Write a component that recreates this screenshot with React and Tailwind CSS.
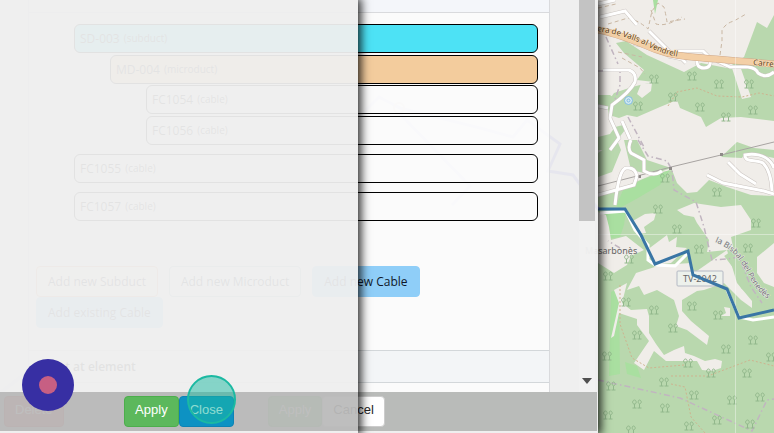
const ROW = "flex h-[29px] items-center gap-1 rounded-md border border-black px-[5px] text-xs text-neutral-900";
const BTN = "h-[31px] rounded border px-[10px] pb-[3px] font-['Liberation_Sans',Arial,sans-serif] text-[13px]";
const ADD = "h-[31px] rounded border px-[11px] text-xs text-gray-900";

const TREES = [
  [654, 79], [692, 76], [719, 84], [638, 106], [673, 97], [700, 107], [753, 110], [749, 84], [726, 117],
  [665, 178], [658, 209], [677, 229], [717, 192], [756, 223], [748, 248], [699, 249], [629, 259], [608, 276],
  [626, 302], [654, 310], [692, 306], [718, 315], [673, 328], [637, 335], [753, 340], [726, 349], [771, 357],
  [688, 363], [711, 373], [664, 382], [747, 373], [694, 395], [732, 400], [760, 397], [637, 404], [665, 408],
  [608, 415], [717, 420], [689, 426], [750, 424], [631, 430], [611, 386], [607, 356],
];

const ROADS =
  "M600 17l25-6 12 14M598 4l17-4M649 31l21 21M603 70h26q8 3 6 12-5 10-23 23l-2 13 9 20-9 12M598 106l10 2M622 121l8 18M630 34l5 10 5 1M668 56l14 3 4 4M675 51h28l7 7q2 10-6 10t-7-9M717 61l13 6h18q8 1 10 6 8 6 16-1M615 205q4-38 12-37 8-1 10 8M631 140q-4 8 0 13l13 7v11q10 6 18 0M598 195l36-10 3-9M707 175l16 8 41 8 10 3M774 168c-6-16-24-14-29-13 0 8 10 4 18 8q8 8 9 28M728 162l12 12 16 10";

function Tree({ x, y }) {
  return (
    <path
      transform={`translate(${x} ${y})`}
      d="M-2.500 4V0M-4.500 4h4M2.500 4V0M.5 4h4M-2.500 0c-3 0-2-4 0-4s2.500 4 0 4M2.500 0C.5-1 1-4 2.500-4s3 3 0 4"
    />
  );
}

function MapView() {
  return (
    <svg className="block h-full w-full" viewBox="0 0 774 433" preserveAspectRatio="xMaxYMin slice" aria-label="Map">
      <defs>
        <path id="road-n" d="M597 31C620 34 639 42 651 48S668 55 690 59" />
        <path id="town" d="M715 242C735 250 741 262 748 275S760 297 790 312" />
      </defs>
      <rect width="774" height="433" fill="#f0ede9" />
      <g fill="#b9d8ae">
        <path d="M616 43L626 41 647 55 684 72 701 63 727 68 744 57 757 22 767 28 774 15V121L741 117 721 118 706 127 701 117 680 108 677 100 660 107 637 117 627 115 619 118 609 115 607 103 614 93 632 87 640 85 654 82 637 80 644 70 624 53Z" />
        <path d="M598 95h12l4 3-6 9-10-2zM598 137l12-3 5-7 8-2 2 5-11 14-4 6h-12z" />
        <path d="M598 153L617 140 621 150 612 172 598 177ZM624 140H637L647 160 671 168 657 173 644 173 631 170Z" />
        <path d="M721 157L737 142 754 148 774 150V158L760 155 745 153 742 158Z" />
        <path d="M598 197L621 188 657 173 672 170 677 183 687 193 697 192 709 180 727 187 751 195 774 196V433H598Z" />
      </g>
      <g fill="#a9dfa0">
        <path d="M624 188l20-9 26-9-10 15-22 13-18 10-4-2zM602 213l24-2-2 14-4 12-14 2zM611 292l8-4 1 86-11 2zM625 362l12 4 4 12-14-4zM653 0h5l-3 14z" />
      </g>
      <g fill="#f0ede9">
        <path d="M732 68L740 66 751 97 742 99ZM641 84L652 83 651 91 642 98 637 94Z" />
        <path d="M677 210L694 203 721 207 741 205 751 220 751 230 731 237 733 247 727 250 707 252 709 240 697 223 694 217 684 215Z" />
        <path d="M631 222L645 214 656 213 654 220 644 227 646 233 638 234Z" />
        <path d="M647 250L667 235 669 242 677 237 676 247 687 248 671 263 654 265Z" />
        <path d="M598 212L606 215 609 227 611 240 626 236 644 250 631 256 627 265 614 273 598 263Z" />
        <path d="M774 243L757 257V273L764 283 774 287Z" />
        <path d="M627 290L636 273 661 265 691 263 694 273 727 250 737 283 752 301 752 308 741 300 724 283 704 290 697 291 682 300 682 311 691 321 709 336 707 345 687 330 676 326 679 316 674 300 657 290 644 295 639 286Z" />
        <path d="M627 283L622 303 631 310 647 309 649 316 649 333 656 344 664 355 674 350 684 346 685 353 694 356 705 361 715 359 722 361 721 368 712 371 702 370 697 361 666 361 654 351 644 370 634 363 649 341 637 325 637 319 619 313 614 336 611 338 619 303 614 290Z" />
        <path d="M724 307L730 308V316H721L726 313Z" />
      </g>
      <path d="M727 254l9 12 8 20 22 18" fill="none" stroke="#b9d8ae" strokeWidth="7" />
      <g fill="none" stroke="#c1b5c0" strokeWidth="1.500" strokeDasharray="6 3 1.500 3">
        <path d="M598 71h22v14l-7 20M606 37l12 27M638 140l10 16 19 5 5 9 2 20 22 12 8 25 5 21 3 12 15-1 12-2 12 30 11 16M628 117l16 30M598 380l82 18 72 33 15-31 7-1M620 248l-12-7" />
      </g>
      <path d="M598 186L641 175 671 167 721 155 774 142" fill="none" stroke="#a8a4a2" />
      <g fill="#8e8a88"><path d="M638 175h3v3h-3zM669 167h3v3h-3zM720 153h3v3h-3z" /></g>
      <g fill="none" stroke="#c9b7a3" strokeDasharray="4 3">
        <path d="M598 8l18-4M608 24l20-6q10 2 20 11l4-18 6-8 6 4q2 8 3 15l18-3M651 10l5 14q10 3 26-7M720 55l2-14V30q4-7 12-9l12-7M618 52l24 5M622 58l18 10 5 6" />
        <path d="M668 106l9-14 20-4 20 8 25 1 17-4 15 3M620 285v39l12 34 17 10 35-3M671 376h37l42-16 24 6M671 384l14 3 6 30 14 16" stroke="#ceb38f" strokeDasharray="2 2" />
      </g>
      <path d={ROADS} fill="none" stroke="#cbc5c1" strokeWidth="4" />
      <path d={ROADS} fill="none" stroke="#fff" strokeWidth="3" />
      <path d="M600 213l26-2 9 19 13 15v15l7 5 20 1 14-14M727 290l12 27 14 3 21-3" fill="none" stroke="#fff" strokeWidth="3" />
      <path d="M597 30c18 2 42 13 60 20s25 6 117 14" fill="none" stroke="#cfa88a" strokeWidth="7" />
      <path d="M597 30c18 2 42 13 60 20s25 6 117 14" fill="none" stroke="#f3cfa6" strokeWidth="6" />
      <g fill="none" stroke="#92b88c">
        {TREES.map(([x, y]) => <Tree key={`${x}-${y}`} x={x} y={y} />)}
      </g>
      <path d="M735.500 0v433M598 234.500h176" fill="none" stroke="#fff" strokeOpacity=".4" />
      <g fill="none" stroke="#82bce2"><circle cx="628.500" cy="100.500" r="4" fill="#d3e9f0" /><circle cx="628.500" cy="100.500" r="1.500" /></g>
      <rect x="677" y="271" width="46" height="15" rx="1" fill="#edf1ec" stroke="#b4b9c4" />
      <g fontFamily="'Noto Sans', sans-serif">
        <g fontSize="8" fill="#5e3d1b" stroke="#fbe2bd" strokeWidth="1" paintOrder="stroke">
          <text><textPath href="#road-n">era de Valls al Vendrell</textPath></text>
          <text x="753" y="65" transform="rotate(5 753 65)">Carre</text>
        </g>
        <text x="585" y="254" fontSize="9" fill="#666">Masarbonès</text>
        <text x="683" y="282" fontSize="9" fill="#666">TV-2042</text>
        <text fontSize="8" fill="#76717c" stroke="#e7ece2" strokeWidth="1" paintOrder="stroke"><textPath href="#town">la Bisbal del Penedès</textPath></text>
      </g>
      <path d="M597 209h28l16 26 14 29 33-13 5 24 34 14 12 29 35-8" fill="none" stroke="#3975a5" strokeWidth="3" />
      <path d="M0 393L365 111l14-14 21 11 80 20 33 9 14-17 33 24-12 27 25 4 25 34M400 114l70 72-18 19" fill="none" stroke="#8585de" strokeWidth="3" />
      <circle cx="399" cy="108" r="5" fill="none" stroke="#bd8d77" strokeWidth="2" />
    </svg>
  );
}

function Part({ name, kind, className = "" }) {
  return (
    <div className={`${ROW} ${className}`}>
      {name} <small className="text-[10px]">({kind})</small>
    </div>
  );
}

function SpanPanel() {
  return (
    <section className="absolute inset-y-0 right-44 left-0 flex flex-col bg-[#efefef]/92 pb-[2px] shadow-[1px_0_9px_2px_rgba(0,0,0,0.85)]">
      <div className="flex min-h-0 flex-1 overflow-hidden pr-[3px]">
        <div className="mr-[29px] ml-7 flex flex-1 flex-col border-x border-[#d9dadd] bg-white/75">
          <h2 className="flex h-[13px] shrink-0 items-end border-b border-[#d9dadd] bg-[#f4f6fa] pb-[11px] pl-[21px] text-xs leading-4 font-semibold">Structure</h2>
          <div className="flex flex-1 flex-col px-[11px] pt-[11px]">
            <div className="ml-[34px] flex flex-col gap-[9px]">
              <div className="flex flex-col gap-[2px]">
                <Part name="SD-003" kind="subduct" className="bg-[#4de2f5]" />
                <div className="ml-9 flex flex-col gap-px">
                  <Part name="MD-004" kind="microduct" className="bg-[#f3cc9d]" />
                  <div className="ml-9 flex flex-col gap-[2px]">
                    <Part name="FC1054" kind="cable" />
                    <Part name="FC1056" kind="cable" />
                  </div>
                </div>
              </div>
              <Part name="FC1055" kind="cable" />
              <Part name="FC1057" kind="cable" />
            </div>
            <div className="mt-[45px] -ml-1 flex flex-wrap gap-x-[11px]">
              <button className={`${ADD} border-[#e0a070] bg-[#fff0e4]`}>Add new Subduct</button>
              <button className={`${ADD} border-[#9bb] bg-[#f5fcff]`}>Add new Microduct</button>
              <button className={`${ADD} border-[#8fcef8] bg-[#8fcef8]`}>Add new Cable</button>
              <button className={`${ADD} border-[#8fcef8] bg-[#8fcef8]`}>Add existing Cable</button>
            </div>
          </div>
          <h2 className="flex h-[33px] shrink-0 items-center border-y border-[#d3d7da] bg-[#f3f5f7] pl-[21px] text-xs font-semibold">Cut at element</h2>
          <div className="h-[9px] shrink-0" />
        </div>
        <div className="flex w-4 flex-col items-center justify-between bg-[#f1f1f1]/60 pb-2">
          <div className="h-[221px] w-full bg-[#c3c3c3]" />
          <svg className="h-[6px] w-[10px]" viewBox="0 0 10 6"><path d="M0 0h10L5 6z" fill="#505050" /></svg>
        </div>
      </div>
      <footer className="mr-px flex h-[39px] items-center bg-[#b9bbb9] pr-2 pl-1">
        <button className={`${BTN} border-[#c9302c] bg-[#d9534f] text-white`}>Delete</button>
        <div className="flex flex-1 justify-center">
          <button className={`${BTN} border-[#4cae4c] bg-[#5cb85c] text-white`}>Apply</button>
          <button className={`${BTN} border-[#ccc] bg-white text-neutral-800`}>Cancel</button>
        </div>
      </footer>
    </section>
  );
}

function FrontPanel() {
  return (
    <section className="absolute inset-y-0 right-104 left-0 flex flex-col shadow-[1px_0_9px_2px_rgba(0,0,0,0.85)]">
      <div className="flex-1 bg-[#eeeeee]/95" />
      <footer className="flex h-[39px] items-center justify-center bg-[#bababa]/95">
        <button className={`${BTN} border-[#4cae4c] bg-[#5cb85c] text-white`}>Apply</button>
        <button className={`${BTN} border-[#0d83b5] bg-[#0d92c3] text-white`}>Close</button>
      </footer>
      <div className="h-[2px] bg-[#eeeeee]/95" />
      <button aria-label="Record" className="absolute bottom-[22px] left-[22px] flex size-[52px] items-center justify-center rounded-full bg-[#372fa3]">
        <span className="size-[18px] rounded-full bg-[#c75f83]" />
      </button>
      <span className="pointer-events-none absolute bottom-[9px] left-[187px] size-[49px] rounded-full border-2 border-[#1bb9a2] bg-[#1bb9a2]/50" />
    </section>
  );
}

export default function App() {
  return (
    <main className="relative h-screen overflow-hidden font-['Open_Sans','Noto_Sans',sans-serif]">
      <MapView />
      <SpanPanel />
      <FrontPanel />
    </main>
  );
}
